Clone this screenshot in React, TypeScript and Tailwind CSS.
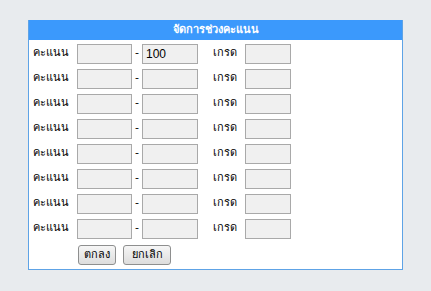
const rows = ['100', '', '', '', '', '', '', ''];

function Box({ w, value = '' }: { w: string; value?: string }) {
    return (
        <input
            readOnly
            value={value}
            className={`${w} h-[20px] border border-[#a9a9a9] bg-[#f0f0f0] px-[3px] text-[12px] text-black outline-none font-['Liberation_Sans',sans-serif]`}
        />
    );
}

export default function App() {
    return (
        <div className="w-[431px] h-[291px] bg-[#e8ebee] pt-[20px] pl-[28px] font-['Tahoma','DejaVu_Sans',sans-serif] text-[11px] text-black">
            <div className="w-[375px] h-[250px] border border-[#5ea3e6] border-t-0 bg-white">
                <div className="h-[20px] bg-[#3b99fc] text-white font-bold text-[11px] leading-[20px] text-center">
                    จัดการช่วงคะแนน
                </div>
                <div className="pt-[1px]">
                    {rows.map((v, i) =>
                        <div key={i} className="flex items-center h-[25px]">
                            <span className="w-[48px] pl-[4px]">คะแนน</span>
                            <Box w="w-[55px]" />
                            <span className="w-[10px] text-center">-</span>
                            <Box w="w-[56px]" value={v} />
                            <span className="w-[15px]" />
                            <span className="w-[32px]">เกรด</span>
                            <Box w="w-[46px]" />
                        </div>
                    )}
                    <div className="flex gap-[7px] pl-[49px] pt-[4px]">
                        <button className="w-[38px] h-[20px] border border-[#8e8f8f] rounded-[3px] bg-gradient-to-b from-[#f6f6f6] to-[#dddddd] text-[11px]">ตกลง</button>
                        <button className="w-[48px] h-[20px] border border-[#8e8f8f] rounded-[3px] bg-gradient-to-b from-[#f6f6f6] to-[#dddddd] text-[11px]">ยกเลิก</button>
                    </div>
                </div>
            </div>
        </div>
    );
}
